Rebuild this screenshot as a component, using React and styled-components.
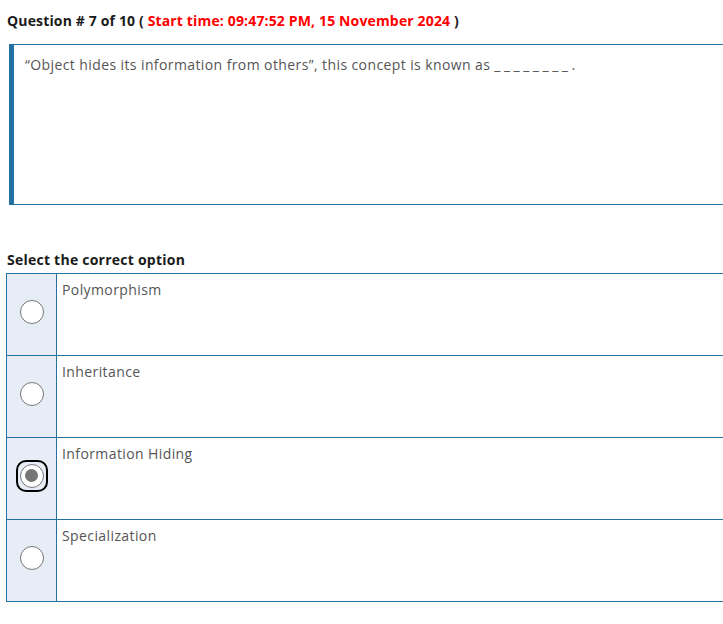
import React from 'react';
import styled, { createGlobalStyle } from 'styled-components';

const GlobalStyle = createGlobalStyle`
  body {
    margin: 0;
    background: #fff;
    overflow: hidden;
    font-family: 'Open Sans', 'Liberation Sans', sans-serif;
  }
`;

const Page = styled.div`
  padding: 11px 0 0 7px;
`;

const Title = styled.div`
  font-size: 14px;
  font-weight: 700;
  color: #1b1b1b;
  line-height: 20px;
  letter-spacing: 0.15px;
`;

const StartTime = styled.span`
  color: #f00;
`;

const QuestionBox = styled.div`
  box-sizing: border-box;
  margin: 13px 0 0 2px;
  height: 161px;
  border: 1px solid #2471a3;
  border-left: 5px solid #2471a3;
  border-right: none;
  padding: 10px 11px;
  font-size: 14px;
  color: #555;
  line-height: 20px;
  letter-spacing: 0.4px;
`;

const Blank = styled.span`
  letter-spacing: 3.5px;
`;

const SectionLabel = styled.div`
  margin-top: 45px;
  font-size: 14px;
  font-weight: 700;
  color: #1b1b1b;
  line-height: 20px;
  letter-spacing: 0.24px;
`;

const Options = styled.div`
  margin: 3px 0 0 -1px;
  border-top: 1px solid #2471a3;
  border-left: 1px solid #2471a3;
`;

const Option = styled.div`
  display: grid;
  grid-template-columns: 50px 1fr;
  height: 81px;
  border-bottom: 1px solid #2471a3;
`;

const RadioCell = styled.div`
  background: #e6edf6;
  border-right: 1px solid #2471a3;
  display: flex;
  align-items: center;
  justify-content: center;
  padding-bottom: 6px;
`;

const Radio = styled.span`
  box-sizing: border-box;
  width: 24px;
  height: 24px;
  border-radius: 50%;
  border: 1px solid #767676;
  background: #fff;
  display: flex;
  align-items: center;
  justify-content: center;
`;

const Dot = styled.span`
  width: 13px;
  height: 13px;
  border-radius: 50%;
  background: #767676;
`;

const FocusRing = styled.span`
  box-sizing: border-box;
  width: 32px;
  height: 32px;
  border: 2.5px solid #000;
  border-radius: 10px;
  display: flex;
  align-items: center;
  justify-content: center;
`;

const OptionText = styled.div`
  padding: 6px 5px;
  font-size: 14px;
  color: #555;
  line-height: 20px;
  letter-spacing: 0.4px;
`;

const options = ['Polymorphism', 'Inheritance', 'Information Hiding', 'Specialization'];
const selected = 2;

const App = () => (
  <Page>
    <GlobalStyle />
    <Title>
      Question # 7 of 10 ( <StartTime>Start time: 09:47:52 PM, 15 November 2024</StartTime> )
    </Title>
    <QuestionBox>
      “Object hides its information from others”, this concept is known as <Blank>________</Blank>.
    </QuestionBox>
    <SectionLabel>Select the correct option</SectionLabel>
    <Options>
      {options.map((text, i) => (
        <Option key={text}>
          <RadioCell>
            {i === selected ? (
              <FocusRing>
                <Radio>
                  <Dot />
                </Radio>
              </FocusRing>
            ) : (
              <Radio />
            )}
          </RadioCell>
          <OptionText>{text}</OptionText>
        </Option>
      ))}
    </Options>
  </Page>
);

export default App;
